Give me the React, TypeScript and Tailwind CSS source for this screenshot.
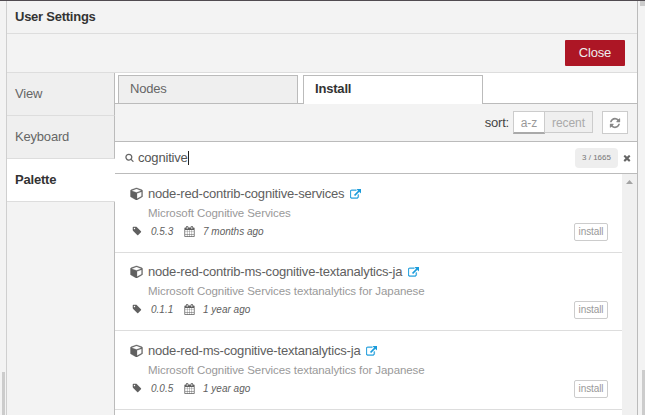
import React from "react";

const PATHS = {
  external:
    "M1408 928v320q0 119-84.5 203.5t-203.5 84.5h-832q-119 0-203.5-84.5t-84.5-203.5v-832q0-119 84.5-203.5t203.5-84.5h704q14 0 23 9t9 23v64q0 14-9 23t-23 9h-704q-66 0-113 47t-47 113v832q0 66 47 113t113 47h832q66 0 113-47t47-113v-320q0-14 9-23t23-9h64q14 0 23 9t9 23zm384-864v512q0 26-19 45t-45 19-45-19l-176-176-652 652q-10 10-23 10t-23-10l-114-114q-10-10-10-23t10-23l652-652-176-176q-19-19-19-45t19-45 45-19h512q26 0 45 19t19 45z",
  refresh:
    "M1639 1056q0 5-1 7-64 268-268 434.5t-478 166.5q-146 0-282.5-55t-243.5-157l-129 129q-19 19-45 19t-45-19-19-45v-448q0-26 19-45t45-19h448q26 0 45 19t19 45-19 45l-137 137q71 66 161 102t187 36q134 0 250-65t186-179q11-17 53-117 8-23 30-23h192q13 0 22.5 9.5t9.5 22.5zm25-800v448q0 26-19 45t-45 19h-448q-26 0-45-19t-19-45 19-45l138-138q-148-137-349-137-134 0-250 65t-186 179q-11 17-53 117-8 23-30 23h-199q-13 0-22.5-9.5t-9.5-22.5v-7q65-268 270-434.5t480-166.5q146 0 284 55.5t245 156.5l130-129q19-19 45-19t45 19 19 45z",
  search:
    "M1216 832q0-185-131.5-316.5t-316.5-131.5-316.5 131.5-131.5 316.5 131.5 316.5 316.5 131.5 316.5-131.5 131.5-316.5zm512 832q0 52-38 90t-90 38q-54 0-90-38l-343-342q-179 124-399 124-143 0-273.5-55.5t-225-150-150-225-55.5-273.5 55.5-273.5 150-225 225-150 273.5-55.5 273.5 55.5 225 150 150 225 55.5 273.5q0 220-124 399l343 343q37 37 37 90z",
  tag: "M576 448q0-53-37.5-90.5t-90.5-37.5-90.5 37.5-37.5 90.5 37.5 90.5 90.5 37.5 90.5-37.5 37.5-90.5zm1067 576q0 53-37 90l-491 492q-39 37-91 37-53 0-90-37l-715-716q-38-37-64.5-101t-26.5-117v-416q0-52 38-90t90-38h416q53 0 117 26.5t102 64.5l715 714q37 39 37 91z",
  times:
    "M1490 1322q0 40-28 68l-136 136q-28 28-68 28t-68-28l-294-294-294 294q-28 28-68 28t-68-28l-136-136q-28-28-28-68t28-68l294-294-294-294q-28-28-28-68t28-68l136-136q28-28 68-28t68 28l294 294 294-294q28-28 68-28t68 28l136 136q28 28 28 68t-28 68l-294 294 294 294q28 28 28 68z",
  calendar:
    "M192 1664h288v-288h-288v288zm352 0h320v-288h-320v288zm-352-352h288v-320h-288v320zm352 0h320v-320h-320v320zm-352-384h288v-288h-288v288zm736 736h320v-288h-320v288zm-384-736h320v-288h-320v288zm768 736h288v-288h-288v288zm-384-352h320v-320h-320v320zm-352-864v-288q0-13-9.5-22.5t-22.5-9.5h-64q-13 0-22.5 9.5t-9.5 22.5v288q0 13 9.5 22.5t22.5 9.5h64q13 0 22.5-9.5t9.5-22.5zm736 864h288v-320h-288v320zm-384-384h320v-288h-320v288zm384 0h288v-288h-288v288zm32-480v-288q0-13-9.5-22.5t-22.5-9.5h-64q-13 0-22.5 9.5t-9.5 22.5v288q0 13 9.5 22.5t22.5 9.5h64q13 0 22.5-9.5t9.5-22.5zm384-64v1280q0 52-38 90t-90 38h-1408q-52 0-90-38t-38-90v-1280q0-52 38-90t90-38h128v-96q0-66 47-113t113-47h64q66 0 113 47t47 113v96h384v-96q0-66 47-113t113-47h64q66 0 113 47t47 113v96h128q52 0 90 38t38 90z",
  cube: "M896 1629l640-349v-636l-640 233v752zm-64-865l698-254-698-254-698 254zm832-252v768q0 35-18 65t-49 47l-704 384q-28 16-61 16t-61-16l-704-384q-31-17-49-47t-18-65v-768q0-40 23-73t61-47l704-256q22-8 44-8t44 8l704 256q38 14 61 47t23 73z",
};

function Icon({ name, className, box = "0 0 1792 1792" }: { name: keyof typeof PATHS; className: string; box?: string }) {
  return (
    <svg viewBox={box} fill="currentColor" className={`shrink-0 ${className}`} aria-hidden="true">
      <path d={PATHS[name]} />
    </svg>
  );
}

interface Module {
  name: string;
  description: string;
  version: string;
  updated: string;
  box: string;
}

const MODULES: Module[] = [
  {
    name: "node-red-contrib-cognitive-services",
    description: "Microsoft Cognitive Services",
    version: "0.5.3",
    updated: "7 months ago",
    box: "h-[79px] pt-[10px]",
  },
  {
    name: "node-red-contrib-ms-cognitive-textanalytics-ja",
    description: "Microsoft Cognitive Services textanalytics for Japanese",
    version: "0.1.1",
    updated: "1 year ago",
    box: "h-[78px] pt-[9px]",
  },
  {
    name: "node-red-ms-cognitive-textanalytics-ja",
    description: "Microsoft Cognitive Services textanalytics for Japanese",
    version: "0.0.5",
    updated: "1 year ago",
    box: "h-[79px] pt-[10px]",
  },
];

function ModuleRow({ module }: { module: Module }) {
  return (
    <li className={`border-b border-[#dddddd] pr-[14px] pl-[15px] ${module.box}`}>
      <div className="flex h-5 items-center text-[13px] text-[#606060]">
        <Icon name="cube" box="0 0 1664 1792" className="mr-[5px] mb-px h-[13px] w-[13px] stroke-current stroke-[40] text-[#606060]" />
        <span>{module.name}</span>
        <Icon name="external" className="ml-[6px] h-[11px] w-[11px] stroke-current stroke-[60] text-[#1a9bdc]" />
      </div>
      <div className="flex h-[18px] items-center pt-[2px] pl-[18px] text-[11.5px] tracking-[-0.085px] text-[#999999]">
        {module.description}
      </div>
      <div className="flex h-5 items-center text-[10px] tracking-normal text-[#606060] italic">
        <span className="flex h-5 items-center pb-px">
          <Icon name="tag" className="mb-px ml-[2px] h-[10px] w-[10px]" />
          <span className="ml-[9px] w-[33px]">{module.version}</span>
          <Icon name="calendar" className="h-[11px] w-[11px]" />
          <span className="ml-2">{module.updated}</span>
        </span>
        <button className="ml-auto h-[18px] w-[34px] rounded-[2px] border border-[#cccccc] text-[10px] leading-4 tracking-[-0.1px] text-[#999999] not-italic">
          install
        </button>
      </div>
    </li>
  );
}

export default function App() {
  return (
    <div className="flex h-[415px] w-[645px] overflow-hidden border-t border-[#504b50] bg-[#f3f3f3] font-['Liberation_Sans',Arial,sans-serif] text-[13px] tracking-[-0.19px] text-[#666666]">
      <div className="flex w-[6px] shrink-0 items-end pl-[2px]">
        <div className="h-[43px] w-[3px] bg-[#cccccc]" />
      </div>

      <div className="flex w-[632px] shrink-0 flex-col border-r border-l border-r-[#bbbbbb] border-l-[#cfcfcf]">
        <header className="flex h-[33px] shrink-0 items-center border-b border-[#dddddd] pl-2 font-bold tracking-[-0.25px] text-[#333333]">
          User Settings
        </header>
        <div className="flex h-[39px] shrink-0 items-center justify-end border-b border-[#dddddd] pr-3">
          <button className="h-[26px] w-[60px] rounded-[1px] bg-[#ad1625] text-[13px] text-[#eeeeee]">Close</button>
        </div>

        <div className="flex min-h-0 flex-1">
          <nav className="flex w-[108px] shrink-0 flex-col">
            <a className="flex h-[43px] shrink-0 items-center border-r border-b border-r-[#bbbbbb] border-b-[#dddddd] bg-[#efefef] pl-2">View</a>
            <a className="flex h-[43px] shrink-0 items-center border-r border-b border-r-[#bbbbbb] border-b-[#dddddd] bg-[#efefef] pl-2">Keyboard</a>
            <a className="flex h-[43px] shrink-0 items-center border-b border-[#dddddd] bg-white pl-2 font-bold text-[#333333]">Palette</a>
            <div className="flex-1 border-r border-[#bbbbbb]" />
          </nav>

          <section className="flex min-w-0 flex-1 flex-col bg-white">
            <div className="flex h-[31px] shrink-0 items-end">
              <div className="h-px w-[3px] bg-[#bbbbbb]" />
              <div className="flex h-[29px] w-[180px] items-center border border-[#bbbbbb] bg-[#efefef] pb-px pl-[11px] tracking-[-0.22px]">Nodes</div>
              <div className="h-px w-[5px] bg-[#bbbbbb]" />
              <div className="flex h-[29px] w-[180px] items-center border border-b-0 border-[#bbbbbb] bg-white pb-[2px] pl-[11px] font-bold text-[#333333]">
                Install
              </div>
              <div className="h-px flex-1 bg-[#bbbbbb]" />
            </div>

            <div className="flex h-[38px] shrink-0 items-center justify-end border-b border-[#bbbbbb] bg-[#f3f3f3] pr-[9px]">
              <span className="mr-1 text-[#444444]">sort:</span>
              <button className="h-[23px] w-8 border border-b-2 border-[#cccccc] border-b-[#aaaaaa] bg-white text-[12px] leading-[22px] tracking-normal text-[#999999]">
                a-z
              </button>
              <button className="mb-px h-[22px] w-12 border border-l-0 border-[#cccccc] bg-[#efefef] pt-px text-[12px] leading-[21px] tracking-[-0.05px] text-[#aaaaaa]">
                recent
              </button>
              <button className="ml-[9px] flex h-[23px] w-[26px] items-center justify-center border border-[#cccccc] bg-white text-[#888888]">
                <Icon name="refresh" className="h-3 w-3" />
              </button>
            </div>

            <div className="flex h-8 shrink-0 items-center border-b border-[#bbbbbb] pr-[5px] pl-[10px]">
              <Icon name="search" className="h-[9px] w-[9px]" />
              <span className="ml-1 text-[#555555]">cognitive</span>
              <span className="h-[14px] w-px bg-[#222222]" />
              <span className="ml-auto flex h-5 w-[43px] items-center justify-center rounded-[4px] bg-[#eeeeee] text-[8px] tracking-normal text-[#777777]">
                3 / 1665
              </span>
              <Icon name="times" className="ml-1 h-[10px] w-[10px]" />
            </div>

            <div className="flex min-h-0 flex-1">
              <ul className="min-w-0 flex-1">
                {MODULES.map((module) => (
                  <ModuleRow key={module.name} module={module} />
                ))}
              </ul>
              <div className="flex w-[15px] shrink-0 justify-center bg-[#f0f0f0] pt-[6px]">
                <svg viewBox="0 0 7 4" className="h-1 w-[7px] fill-[#a3a3a3]">
                  <path d="M3.5 0 7 4H0Z" />
                </svg>
              </div>
            </div>
          </section>
        </div>
      </div>

      <div className="flex w-[7px] shrink-0 flex-col items-end justify-between">
        <div className="h-[5px] w-[5px] bg-[#cccccc]" />
        <div className="h-[45px] w-[3px] bg-[#cccccc]" />
      </div>
    </div>
  );
}
